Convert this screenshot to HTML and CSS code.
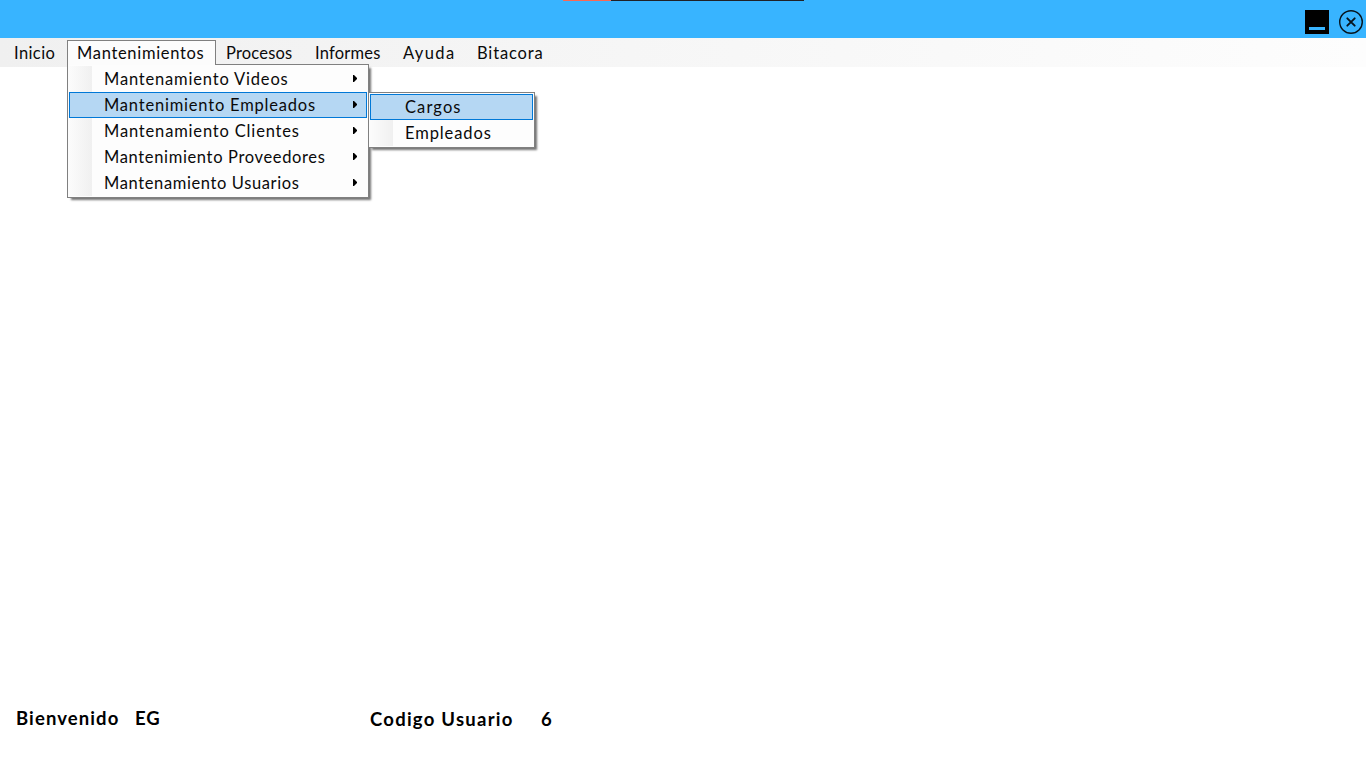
FILE: index.html
```html
<!DOCTYPE html>
<html lang="es">
<head>
<meta charset="utf-8">
<title>Menu principal</title>
<link rel="stylesheet" href="styles.css">
</head>
<body>
<div class="window">
  <header class="titlebar">
    <div class="capture-strip"></div>
    <svg class="minimize" width="24" height="24" viewBox="0 0 24 24"><path fill="#000" d="M0 0h24v24H0z"/><path fill="#38b4ff" d="M4 17h16v3H4z"/></svg>
    <svg class="close" width="24" height="24" viewBox="0 0 24 24" fill="none" stroke="#07141d"><circle cx="12" cy="12" r="11.3" stroke-width="1.4"/><path d="M8.3 8.3l7.4 7.4M15.7 8.3l-7.4 7.4" stroke-width="1.9" stroke-linecap="round"/></svg>
  </header>
  <nav class="menubar">
    <div class="menu inicio"><span>Inicio</span></div>
    <div class="menu open mantenimientos"><span>Mantenimientos</span>
      <div class="dropdown">
        <div class="item videos"><span>Mantenamiento Videos</span><i class="arrow"></i></div>
        <div class="item selected empleados"><span>Mantenimiento Empleados</span><i class="arrow"></i>
          <div class="dropdown submenu">
            <div class="item selected cargos"><span>Cargos</span></div>
            <div class="item sub-empleados"><span>Empleados</span></div>
          </div>
        </div>
        <div class="item clientes"><span>Mantenamiento Clientes</span><i class="arrow"></i></div>
        <div class="item proveedores"><span>Mantenimiento Proveedores</span><i class="arrow"></i></div>
        <div class="item usuarios"><span>Mantenamiento Usuarios</span><i class="arrow"></i></div>
      </div>
    </div>
    <div class="menu procesos"><span>Procesos</span></div>
    <div class="menu informes"><span>Informes</span></div>
    <div class="menu ayuda"><span>Ayuda</span></div>
    <div class="menu bitacora"><span>Bitacora</span></div>
  </nav>
  <main class="workspace"></main>
  <footer class="status">
    <span class="welcome">Bienvenido</span>
    <span class="user">EG</span>
    <span class="code-label">Codigo Usuario</span>
    <span class="code">6</span>
  </footer>
</div>
</body>
</html>
```
FILE: styles.css
```css
* { box-sizing: border-box; }
body { margin: 0; background: #fff; color: #0a0a0a; font-family: "Century Gothic", Lato, sans-serif; font-size: 16.5px; }
.window { display: flex; flex-direction: column; width: 1366px; height: 768px; overflow: hidden; }
.titlebar { display: flex; align-items: flex-start; justify-content: flex-end; gap: 10px; height: 38px; padding: 10px 3px 0 0; background: #38b4ff; position: relative; }
.capture-strip { position: absolute; left: 563px; top: 0; width: 241px; height: 1px; background: linear-gradient(to right, #f96854 48px, #202126 48px); }
.menubar { display: flex; height: 29px; padding-top: 2px; background: linear-gradient(to right, #f0f0f0, #fdfdfd); line-height: 26px; white-space: nowrap; }
.menu { height: 25px; padding-left: 10px; letter-spacing: .2px; }
.inicio { width: 63px; margin-left: 4px; letter-spacing: .4px; }
.mantenimientos { width: 149px; letter-spacing: .68px; }
.procesos { width: 89px; }
.informes { width: 88px; }
.ayuda { width: 74px; letter-spacing: 1.4px; }
.bitacora { width: 90px; letter-spacing: .85px; }
.open { position: relative; padding-left: 9px; border: 1px solid #808080; border-bottom: 0; background: #fcfcfc; line-height: 24px; }
.dropdown { position: absolute; z-index: 1; left: -1px; top: 23px; width: 302px; height: 134px; padding: 1px; border: 1px solid #808080; background: linear-gradient(to right, #fcfcfc, #f0f0f0) 0 1px / 24px calc(100% - 2px) no-repeat #fdfdfd; box-shadow: 3px 3px 2px -1px rgba(0,0,0,.55); line-height: 26px; }
.open::after { content: ""; position: absolute; z-index: 2; left: 0; top: 23px; width: 147px; height: 1px; background: #fcfcfc; }
.item { position: relative; height: 26px; padding-left: 34px; border: 1px solid transparent; line-height: 25px; }
.selected { border-color: #0078d7; background: #b5d7f3; }
.videos { letter-spacing: .82px; }
.empleados { letter-spacing: .8px; }
.clientes { letter-spacing: .83px; }
.proveedores { letter-spacing: .65px; }
.usuarios { letter-spacing: .62px; }
.arrow { position: absolute; right: 9px; top: 8px; width: 4px; height: 7px; background: #000; clip-path: polygon(0 0, 1px 0, 4px 3px, 4px 4px, 1px 7px, 0 7px); }
.submenu { left: 298px; top: -1px; width: 167px; height: 56px; padding: 1px; }
.submenu .cargos { letter-spacing: 1.1px; }
.submenu .sub-empleados { letter-spacing: .9px; }
.workspace { flex: 1; }
.status { display: flex; height: 72px; padding-left: 16px; font-size: 18.5px; font-weight: 700; color: #000; white-space: nowrap; line-height: 44px; }
.welcome { width: 119px; letter-spacing: 1.1px; }
.user { width: 235px; letter-spacing: 1px; }
.code-label { width: 171px; padding-top: 1px; letter-spacing: 1.25px; }
.code { padding-top: 1px; }
```
